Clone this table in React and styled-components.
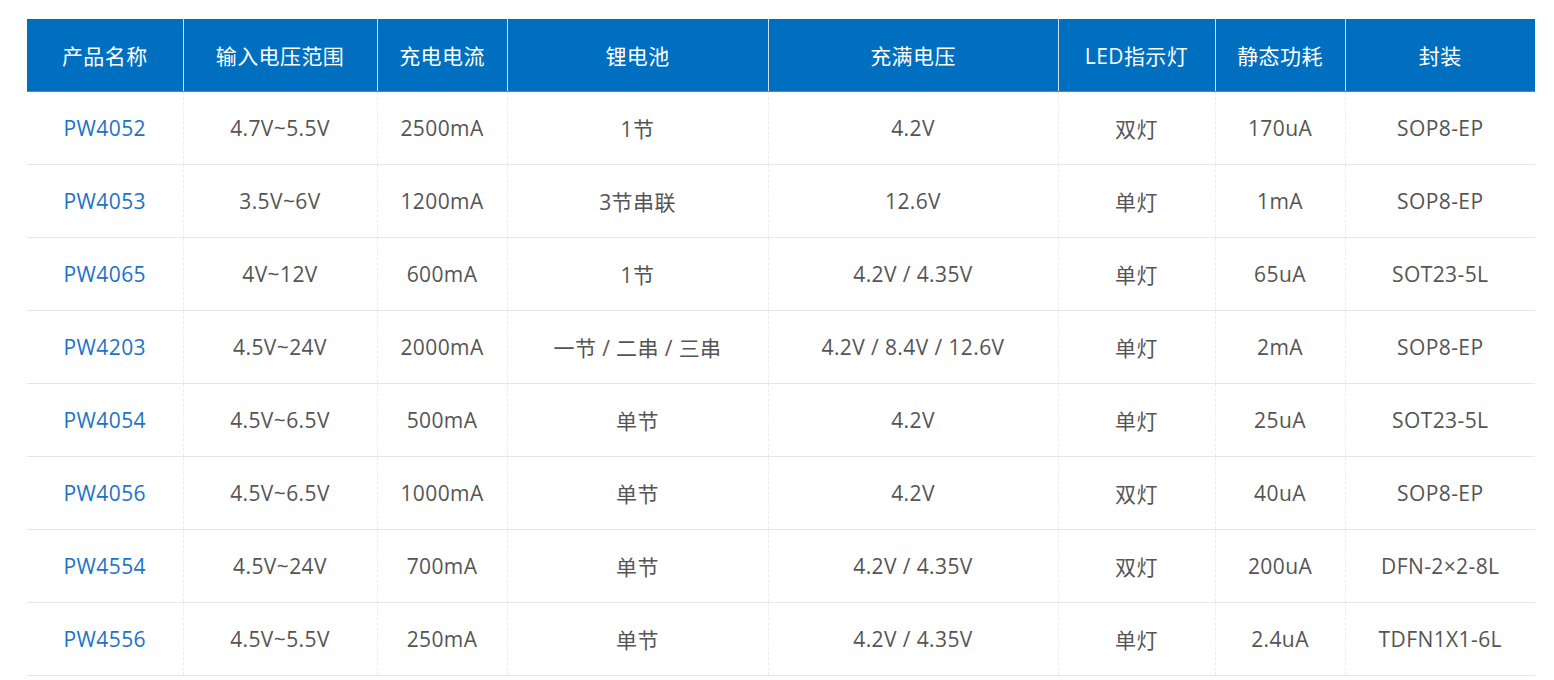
import React from 'react';
import styled, { createGlobalStyle } from 'styled-components';

const GlobalStyle = createGlobalStyle`
  body {
    margin: 0;
    background: #fff;
    font-family: "Open Sans", "Noto Sans CJK SC", sans-serif;
  }
`;

const columns = [
  { title: '产品名称', width: 156 },
  { title: '输入电压范围', width: 194 },
  { title: '充电电流', width: 130 },
  { title: '锂电池', width: 261 },
  { title: '充满电压', width: 290 },
  { title: 'LED指示灯', width: 157 },
  { title: '静态功耗', width: 130 },
  { title: '封装', width: 190 },
];

const rows = [
  ['PW4052', '4.7V~5.5V', '2500mA', '1节', '4.2V', '双灯', '170uA', 'SOP8-EP'],
  ['PW4053', '3.5V~6V', '1200mA', '3节串联', '12.6V', '单灯', '1mA', 'SOP8-EP'],
  ['PW4065', '4V~12V', '600mA', '1节', '4.2V / 4.35V', '单灯', '65uA', 'SOT23-5L'],
  ['PW4203', '4.5V~24V', '2000mA', '一节 / 二串 / 三串', '4.2V / 8.4V / 12.6V', '单灯', '2mA', 'SOP8-EP'],
  ['PW4054', '4.5V~6.5V', '500mA', '单节', '4.2V', '单灯', '25uA', 'SOT23-5L'],
  ['PW4056', '4.5V~6.5V', '1000mA', '单节', '4.2V', '双灯', '40uA', 'SOP8-EP'],
  ['PW4554', '4.5V~24V', '700mA', '单节', '4.2V / 4.35V', '双灯', '200uA', 'DFN-2×2-8L'],
  ['PW4556', '4.5V~5.5V', '250mA', '单节', '4.2V / 4.35V', '单灯', '2.4uA', 'TDFN1X1-6L'],
];

const Wrap = styled.div`
  padding: 19px 0 0 27px;
`;

const Table = styled.table`
  width: 1508px;
  border-collapse: collapse;
  table-layout: fixed;
  font-size: 21px;
  letter-spacing: 0.4px;
`;

const HeadCell = styled.th`
  height: 72px;
  padding: 0;
  background: #006fbf;
  color: #fff;
  font-weight: normal;
  text-align: center;
  border-right: 1px solid #cfe2f3;
  border-bottom: 1px solid #3a8fd0;
  &:last-child {
    border-right: none;
  }
`;

const Row = styled.tr`
  border-bottom: 1px solid #e6e6e6;
`;

const Cell = styled.td`
  height: 72px;
  padding: 0;
  text-align: center;
  color: ${(p) => (p.$link ? '#1d73c7' : '#555')};
  border-right: 1px dashed #ececec;
  &:last-child {
    border-right: none;
  }
`;

export default function App() {
  return (
    <Wrap>
      <GlobalStyle />
      <Table>
        <colgroup>
          {columns.map((c) => (
            <col key={c.title} style={{ width: c.width }} />
          ))}
        </colgroup>
        <thead>
          <tr>
            {columns.map((c) => (
              <HeadCell key={c.title}>{c.title}</HeadCell>
            ))}
          </tr>
        </thead>
        <tbody>
          {rows.map((r) => (
            <Row key={r[0]}>
              {r.map((v, i) => (
                <Cell key={i} $link={i === 0}>
                  {v}
                </Cell>
              ))}
            </Row>
          ))}
        </tbody>
      </Table>
    </Wrap>
  );
}
